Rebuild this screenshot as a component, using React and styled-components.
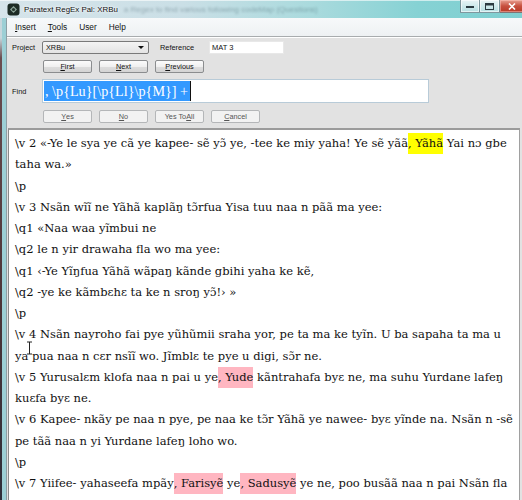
import React from 'react'
import styled, { createGlobalStyle } from 'styled-components'

const GlobalStyle = createGlobalStyle`
  html, body {
    margin: 0;
    padding: 0;
    width: 522px;
    height: 500px;
    overflow: hidden;
    background: #3a2a2c;
  }
`

const T = '\u0303'

const lines = [
  ['\\v 2 «-Ye le sya ye cã ye kapee- sẽ yɔ' + T + ' ye, -tee ke miy yaha! Ye sẽ yãã', { hit: 'current', text: ', Yãhã' }, ' Yai nɔ gbe'],
  ['taha wa.»'],
  ['\\p'],
  ['\\v 3 Nsãn wĩĩ ne Yãhã kaplãŋ tɔ' + T + 'rfua Yisa tuu naa n pãã ma yee:'],
  ['\\q1 «Naa waa yĩmbui ne'],
  ['\\q2 le n yir drawaha fla wo ma yee:'],
  ['\\q1 ‹-Ye Yĩŋfua Yãhã wãpaŋ kãnde gbihi yaha ke kẽ,'],
  ['\\q2 -ye ke kãmbɛhɛ ta ke n sroŋ yɔ' + T + '!› »'],
  ['\\p'],
  ['\\v 4 Nsãn nayroho fai pye yũhũmii sraha yor, pe ta ma ke tyĩn. U ba sapaha ta ma u'],
  ['ya pua naa n cɛr nsĩĩ wo. Jĩmblɛ te pye u digi, sɔ' + T + 'r ne.'],
  ['\\v 5 Yurusalɛm klofa naa n pai u ye', { hit: 'other', text: ', Yude' }, ' kãntrahafa byɛ ne, ma suhu Yurdane lafeŋ'],
  ['kuɛfa byɛ ne.'],
  ['\\v 6 Kapee- nkãy pe naa n pye, pe naa ke tɔ' + T + 'r Yãhã ye nawee- byɛ yĩnde na. Nsãn n -sẽ'],
  ['pe tãã naa n yi Yurdane lafeŋ loho wo.'],
  ['\\p'],
  ['\\v 7 Yiifee- yahaseefa mpãy', { hit: 'other', text: ', Farisyẽ' }, ' ye', { hit: 'other', text: ', Sadusyẽ' }, ' ye ne, poo busãã naa n pai Nsãn fla'],
]

function AppIcon() {
  return (
    <svg width='13' height='13' viewBox='0 0 13 13'>
      <rect x='0.5' y='0.5' width='12' height='12' rx='3' fill='#1d2b24' />
      <path d='M3 6.5 L6.5 3 L10 6.5 L6.5 10 Z' fill='#8fa79a' />
      <circle cx='6.5' cy='6.5' r='1.6' fill='#24352c' />
    </svg>
  )
}

function IBeam() {
  return (
    <svg width='7' height='14' viewBox='0 0 7 14'>
      <path d='M1 1 H6 M3.5 1 V13 M1 13 H6' stroke='#222' strokeWidth='1' fill='none' />
    </svg>
  )
}

export default function App() {
  return (
    <>
      <GlobalStyle />
      <Screen>
        <TitleBar>
          <AppIcon />
          <Title>Paratext RegEx Pal: XRBu</Title>
          <Ghost>a Regex to find various following codeMap (Questions)</Ghost>
          <WinButtons>
            <WinButton>
              <svg width='8' height='3'><rect width='8' height='2' y='1' fill='#2a3a40' /></svg>
            </WinButton>
            <WinButton>
              <svg width='9' height='7'><rect x='0.5' y='0.5' width='8' height='6' fill='none' stroke='#2a3a40' /><rect x='0.5' y='0.5' width='8' height='2' fill='#2a3a40' /></svg>
            </WinButton>
            <CloseButton>
              <svg width='8' height='7'><path d='M1 0.5 L7 6.5 M7 0.5 L1 6.5' stroke='#fff' strokeWidth='1.6' /></svg>
            </CloseButton>
          </WinButtons>
        </TitleBar>
        <Body>
          <Edge />
          <Frame>
            <MenuBar>
              <MenuItem><u>I</u>nsert</MenuItem>
              <MenuItem><u>T</u>ools</MenuItem>
              <MenuItem>User</MenuItem>
              <MenuItem>Help</MenuItem>
            </MenuBar>
            <Form>
              <Row>
                <Label>Project</Label>
                <Select>
                  <span>XRBu</span>
                  <Arrow />
                </Select>
                <Label $gap>Reference</Label>
                <TextInput>MAT 3</TextInput>
              </Row>
              <Row>
                <Label />
                <ButtonRow>
                  <Button><u>F</u>irst</Button>
                  <Button><u>N</u>ext</Button>
                  <Button><u>P</u>revious</Button>
                </ButtonRow>
              </Row>
              <Row>
                <Label>Find</Label>
                <FindBox>
                  <Selection>, \p{'{'}Lu{'}'}[\p{'{'}Ll{'}'}\p{'{'}M{'}'}] +</Selection>
                  <Caret />
                </FindBox>
              </Row>
              <Row>
                <Label />
                <ButtonRow>
                  <Button $disabled><u>Y</u>es</Button>
                  <Button $disabled><u>N</u>o</Button>
                  <Button $disabled>Yes To <u>A</u>ll</Button>
                  <Button $disabled><u>C</u>ancel</Button>
                </ButtonRow>
              </Row>
            </Form>
            <Editor>
              {lines.map((segs, i) => (
                <Line key={i}>
                  {segs.map((s, j) =>
                    typeof s === 'string'
                      ? <React.Fragment key={j}>{s}</React.Fragment>
                      : <Mark key={j} $current={s.hit === 'current'}>{s.text}</Mark>
                  )}
                </Line>
              ))}
              <Pointer><IBeam /></Pointer>
            </Editor>
          </Frame>
        </Body>
      </Screen>
    </>
  )
}

const Screen = styled.div`
  width: 522px;
  height: 500px;
  display: flex;
  flex-direction: column;
  overflow: hidden;
`

const TitleBar = styled.div`
  position: relative;
  height: 18px;
  flex: none;
  display: flex;
  align-items: center;
  gap: 4px;
  padding-left: 7px;
  background: linear-gradient(90deg, #d6e4ea 0%, #cadfe6 35%, #a9dadd 60%, #86d2d4 80%, #7fcfd0 100%);
  box-shadow: inset 0 1px 0 rgba(255, 255, 255, 0.6);
`

const Title = styled.span`
  font-family: "Liberation Sans", Arial, sans-serif;
  font-size: 7.9px;
  color: #111;
  text-shadow: 0 0 4px #fff, 0 0 2px #fff;
  white-space: nowrap;
  position: relative;
  z-index: 1;
`

const Ghost = styled.span`
  font-family: "Liberation Sans", Arial, sans-serif;
  font-size: 8px;
  color: rgba(40, 70, 80, 0.35);
  filter: blur(1.2px);
  white-space: nowrap;
  margin-left: 2px;
`

const WinButtons = styled.div`
  position: absolute;
  top: 0;
  right: -6px;
  display: flex;
  height: 13px;
`

const WinButton = styled.div`
  width: 20px;
  height: 13px;
  display: flex;
  align-items: center;
  justify-content: center;
  border: 1px solid rgba(60, 90, 100, 0.6);
  border-top: none;
  box-sizing: border-box;
  background: linear-gradient(#e8f4f5, #b6dfe2);
  box-shadow: inset 0 0 0 1px rgba(255, 255, 255, 0.6);
  & + & {
    border-left: none;
  }
`

const CloseButton = styled(WinButton)`
  width: 28px;
  border-left: none;
  border-radius: 0 0 3px 0;
  background: linear-gradient(#e8a193, #c7503f 50%, #b83a28);
  box-shadow: inset 0 0 0 1px rgba(255, 200, 190, 0.5);
  justify-content: flex-start;
  padding-left: 8px;
`

const Body = styled.div`
  flex: 1;
  display: flex;
  min-height: 0;
`

const Edge = styled.div`
  width: 2px;
  flex: none;
  background: linear-gradient(#c7d6dc 0px, #c7d6dc 20px, #6a4d50 40px, #4a3438 60%, #2e2f3a 100%);
`

const Frame = styled.div`
  flex: 1;
  display: flex;
  flex-direction: column;
  min-width: 0;
  border-left: 4px solid #9ccfd5;
  box-shadow: inset 1px 0 0 #8d9ea4;
  padding-left: 1px;
  background: #e2e2e2;
`

const MenuBar = styled.div`
  height: 18px;
  flex: none;
  display: flex;
  align-items: center;
  padding-left: 8px;
  background: linear-gradient(#f7f9fa, #eef1f3);
  border-bottom: 1px solid #a8acae;
  box-shadow: 0 1px 0 #fff;
`

const MenuItem = styled.span`
  font-family: "Liberation Sans", Arial, sans-serif;
  font-size: 8.3px;
  color: #111;
  margin-right: 12px;
  u { text-decoration-thickness: 0.5px; text-underline-offset: 1px; }
`

const Form = styled.div`
  flex: none;
  display: flex;
  flex-direction: column;
  gap: 6px;
  padding: 4px 0 5px 5px;
  & > :nth-child(4) { margin-top: 1px; }
`

const Row = styled.div`
  display: flex;
  align-items: center;
`

const Label = styled.span`
  font-family: "Liberation Sans", Arial, sans-serif;
  font-size: 7.4px;
  color: #111;
  width: ${p => (p.$gap ? '49px' : '30px')};
  margin-left: ${p => (p.$gap ? '11px' : '0')};
  flex: none;
`

const Select = styled.div`
  width: 107px;
  height: 13px;
  box-sizing: border-box;
  display: flex;
  align-items: center;
  justify-content: space-between;
  padding: 0 3px;
  border: 1px solid #7a7a7a;
  border-radius: 2px;
  background: linear-gradient(#f4f4f4, #e4e4e4);
  font-family: "Liberation Sans", Arial, sans-serif;
  font-size: 7.3px;
  color: #111;
`

const Arrow = styled.span`
  width: 0;
  height: 0;
  border-left: 3px solid transparent;
  border-right: 3px solid transparent;
  border-top: 3px solid #111;
  margin-right: 1px;
`

const TextInput = styled.div`
  width: 75px;
  height: 13px;
  box-sizing: border-box;
  display: flex;
  align-items: center;
  padding-left: 2px;
  background: #fff;
  border: 1px solid #e8e8e8;
  font-family: "Liberation Sans", Arial, sans-serif;
  font-size: 7.5px;
  color: #111;
`

const ButtonRow = styled.div`
  display: flex;
  gap: 7px;
  margin-left: 1px;
`

const Button = styled.div`
  width: 49px;
  height: 13px;
  box-sizing: border-box;
  display: flex;
  align-items: center;
  justify-content: center;
  border: 1px solid ${p => (p.$disabled ? '#b4b6b8' : '#8b8d8f')};
  border-radius: 2px;
  background: ${p => (p.$disabled ? '#f2f2f2' : 'linear-gradient(#fbfbfb, #f0f0f0 50%, #dedede 51%, #d4d4d4)')};
  font-family: "Liberation Sans", Arial, sans-serif;
  font-size: 7.3px;
  color: ${p => (p.$disabled ? '#555' : '#111')};
  u { text-decoration-thickness: 0.5px; text-underline-offset: 1px; }
`

const FindBox = styled.div`
  width: 387px;
  height: 24px;
  box-sizing: border-box;
  display: flex;
  align-items: stretch;
  padding: 1px;
  background: #fff;
  border: 1px solid #b8cbd8;
`

const Selection = styled.span`
  display: flex;
  align-items: center;
  background: #3399ff;
  color: #fff;
  font-family: "Liberation Serif", "DejaVu Serif", serif;
  font-size: 14.2px;
  padding: 0 2px 0 1px;
  white-space: pre;
`

const Caret = styled.span`
  width: 1px;
  background: #111;
`

const Editor = styled.div`
  position: relative;
  flex: 1;
  margin-left: 1px;
  margin-right: 2px;
  background: #fff;
  border-top: 2px solid #9b9b9b;
  border-left: 1px solid #8a8a8a;
  border-right: 1px solid #a0a0a0;
  padding: 3px 0 0 6px;
  overflow: hidden;
`

const Line = styled.div`
  font-family: "DejaVu Serif", serif;
  font-size: 11.5px;
  line-height: 21.25px;
  height: 21.25px;
  color: #111;
  white-space: pre;
`

const Mark = styled.span`
  display: inline-block;
  background: ${p => (p.$current ? '#ffff00' : '#ffb6c1')};
`

const Pointer = styled.div`
  position: absolute;
  left: 17px;
  top: 211px;
`
